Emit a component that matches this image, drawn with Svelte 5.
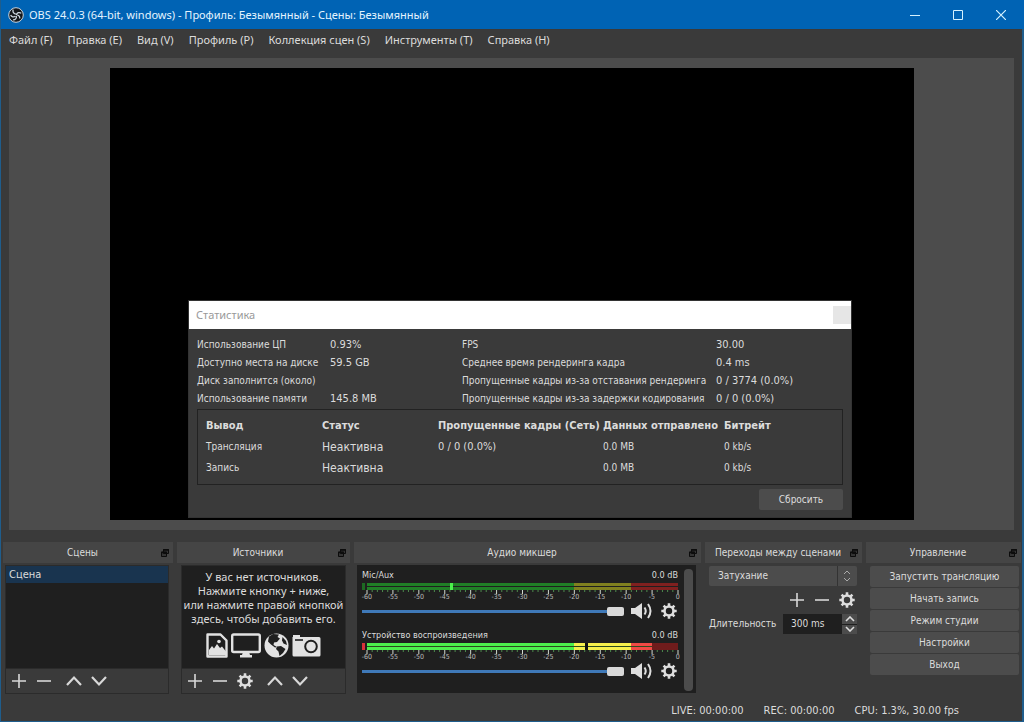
<script lang="ts">
  const menus = [
    "Файл (F)",
    "Правка (E)",
    "Вид (V)",
    "Профиль (P)",
    "Коллекция сцен (S)",
    "Инструменты (T)",
    "Справка (H)",
  ];

  const stats = [
    ["Использование ЦП", "0.93%", "FPS", "30.00"],
    ["Доступно места на диске", "59.5 GB", "Среднее время рендеринга кадра", "0.4 ms"],
    ["Диск заполнится (около)", "", "Пропущенные кадры из-за отставания рендеринга", "0 / 3774 (0.0%)"],
    ["Использование памяти", "145.8 MB", "Пропущенные кадры из-за задержки кодирования", "0 / 0 (0.0%)"],
  ];

  const outputs = [
    { name: "Трансляция", status: "Неактивна", frames: "0 / 0 (0.0%)", sent: "0.0 MB", rate: "0 kb/s" },
    { name: "Запись", status: "Неактивна", frames: "", sent: "0.0 MB", rate: "0 kb/s" },
  ];

  const channels = [
    { id: "mic", name: "Mic/Aux", db: "0.0 dB", level: null, peak: -44, clip: "#1d6b22" },
    { id: "desktop", name: "Устройство воспроизведения", db: "0.0 dB", level: -5, peak: null, clip: "#d8323a" },
  ];

  const scale = [-60, -55, -50, -45, -40, -35, -30, -25, -20, -15, -10, -5, 0];
  const ticks = Array.from({ length: 61 }, (_, i) => i - 60);

  const actions = ["Запустить трансляцию", "Начать запись", "Режим студии", "Настройки", "Выход"];

  let duration = $state("300 ms");

  function pos(db: number) {
    return ((db + 60) / 60) * 100;
  }
</script>

{#snippet plus()}
  <svg width="16" height="16" viewBox="0 0 16 16"><path d="M8 1v14M1 8h14" stroke="#d8d8d8" stroke-width="1.6" /></svg>
{/snippet}

{#snippet minus()}
  <svg width="16" height="16" viewBox="0 0 16 16"><path d="M1 8h14" stroke="#d8d8d8" stroke-width="1.6" /></svg>
{/snippet}

{#snippet up()}
  <svg width="16" height="16" viewBox="0 0 16 16"><path d="M1 12l7-7.500 7 7.500" fill="none" stroke="#d8d8d8" stroke-width="2.200" /></svg>
{/snippet}

{#snippet down()}
  <svg width="16" height="16" viewBox="0 0 16 16"><path d="M1 4l7 7.500L15 4" fill="none" stroke="#d8d8d8" stroke-width="2.200" /></svg>
{/snippet}

{#snippet gear()}
  <svg width="16" height="16" viewBox="0 0 16 16">
    <circle cx="8" cy="8" r="4.500" fill="none" stroke="#dedede" stroke-width="2.600" />
    <path
      d="M8 .3v3M8 12.700v3M.3 8h3M12.700 8h3M2.600 2.600l2 2M11.400 11.400l2 2M2.600 13.400l2-2M11.400 4.600l2-2"
      stroke="#dedede"
      stroke-width="2.600"
    />
  </svg>
{/snippet}

{#snippet dockTitle(title: string)}
  <header class="dock-title">
    <h2>{title}</h2>
    <button class="float" aria-label="Открепить">
      <svg width="8" height="8" viewBox="0 0 8 8">
        <path d="M2.500 .5h5v4h-5zM.5 3h5v4.500h-5z" fill="#333" stroke="#0c0c0c" />
        <path d="M2 1h6M0 3.500h6" stroke="#0c0c0c" stroke-width="1.400" />
      </svg>
    </button>
  </header>
{/snippet}

<div class="window">
  <div class="titlebar">
    <svg class="logo" width="16" height="16" viewBox="0 0 16 16">
      <circle cx="8" cy="8" r="7.300" fill="#15171a" stroke="#c9d4de" stroke-width="1" />
      <path
        d="M5.200 2.600c-.8 2 .2 4 2.600 4.600M13.300 6.200c-2-1.300-4.400-.6-5 1.800M5 12.900c2.300.2 3.800-1.500 3.300-4M2.600 8.200c1 1.700 3 2.200 4.700 1M11.600 11.500c.6-1.500-.5-3-2.300-3.300"
        fill="none"
        stroke="#cdd6de"
        stroke-width="1.300"
      />
    </svg>
    <h1>OBS 24.0.3 (64-bit, windows) - Профиль: Безымянный - Сцены: Безымянный</h1>
    <div class="window-buttons">
      <button aria-label="Свернуть"><svg width="10" height="10" viewBox="0 0 10 10"><path d="M0 5.500h10" stroke="#d5f2ff" /></svg></button>
      <button aria-label="Развернуть"><svg width="10" height="10" viewBox="0 0 10 10"><path d="M.5 .5h9v9h-9z" fill="none" stroke="#d5f2ff" /></svg></button>
      <button aria-label="Закрыть"><svg width="10" height="10" viewBox="0 0 10 10"><path d="M0 0l10 10M10 0L0 10" stroke="#d5f2ff" stroke-width="1.200" /></svg></button>
    </div>
  </div>

  <nav class="menubar">
    {#each menus as item}
      <button>{item}</button>
    {/each}
  </nav>

  <main class="preview">
    <div class="canvas"></div>

    <section class="dialog" aria-label="Статистика">
      <div class="dialog-title">
        <span>Статистика</span>
        <button aria-label="Закрыть статистику"></button>
      </div>
      <div class="dialog-body">
        <div class="stats">
          {#each stats as row}
            {#each row as cell, i}
              <span class:value={i % 2}>{cell}</span>
            {/each}
          {/each}
        </div>
        <div class="outputs">
          <table>
            <thead>
              <tr>
                <th class="c-name">Вывод</th>
                <th class="c-name">Статус</th>
                <th class="c-frames">Пропущенные кадры (Сеть)</th>
                <th class="c-sent">Данных отправлено</th>
                <th>Битрейт</th>
              </tr>
            </thead>
            <tbody>
              {#each outputs as o}
                <tr>
                  <td>{o.name}</td>
                  <td class="status">{o.status}</td>
                  <td class="value">{o.frames}</td>
                  <td>{o.sent}</td>
                  <td>{o.rate}</td>
                </tr>
              {/each}
            </tbody>
          </table>
        </div>
        <button class="btn reset">Сбросить</button>
      </div>
    </section>
  </main>

  <div class="docks">
    <section class="dock">
      {@render dockTitle("Сцены")}
      <div class="panel">
        <ul class="list">
          <li class="selected">Сцена</li>
        </ul>
        <div class="toolbar">
          <button aria-label="Добавить сцену">{@render plus()}</button>
          <button aria-label="Удалить сцену">{@render minus()}</button>
          <button class="apart" aria-label="Сцену вверх">{@render up()}</button>
          <button aria-label="Сцену вниз">{@render down()}</button>
        </div>
      </div>
    </section>

    <section class="dock">
      {@render dockTitle("Источники")}
      <div class="panel sources">
        <div class="list empty">
          <p>
            У вас нет источников.<br />
            Нажмите кнопку + ниже,<br />
            или нажмите правой кнопкой<br />
            здесь, чтобы добавить его.
          </p>
          <div class="kinds">
            <svg width="22" height="25" viewBox="0 0 22 25">
              <path d="M1.500 1.500h13l6 6v16h-19z" fill="#1f1f1f" stroke="#e2e2e2" stroke-width="2.400" stroke-linejoin="round" />
              <path d="M3 22v-5l3-4 2 2.500 3-4.500 3 4 2-1.500 4 5v3.500z" fill="#e2e2e2" />
              <circle cx="13" cy="8.500" r="1.800" fill="#e2e2e2" />
            </svg>
            <svg width="30" height="25" viewBox="0 0 30 25">
              <rect x="1.200" y="1.500" width="27.600" height="17.500" rx="1.500" fill="#1f1f1f" stroke="#e2e2e2" stroke-width="2.400" />
              <path d="M12 19h6l1 3h2v2.500H9V22h2z" fill="#e2e2e2" />
            </svg>
            <svg width="25" height="25" viewBox="0 0 25 25">
              <circle cx="12.500" cy="12.500" r="12" fill="#e2e2e2" />
              <path d="M5 3.500L9 1l6 .5-1.500 2.500 2.500 1.500-3 3.500-3 .5-.5 2.500 3.500 2-2 .5-4-3-3-3z" fill="#1f1f1f" />
              <path d="M13 13.500l4-.5 4.500 3-2.500 4-3.500 3-1-4.500-2.500-2.500z" fill="#1f1f1f" />
              <path d="M18.500 4l3.500 4 1 4-3.500-1.500-1.500-3z" fill="#1f1f1f" />
            </svg>
            <svg width="29" height="25" viewBox="0 0 29 25">
              <path d="M1 4V2h7v2h19a1.500 1.500 0 0 1 1.500 1.500V22a1.500 1.500 0 0 1-1.500 1.500H2A1.500 1.500 0 0 1 .5 22V4z" fill="#e2e2e2" />
              <circle cx="19" cy="13.500" r="5.800" fill="none" stroke="#1f1f1f" stroke-width="2" />
              <path d="M3 7h8" stroke="#1f1f1f" stroke-width="1.600" />
            </svg>
          </div>
        </div>
        <div class="toolbar">
          <button aria-label="Добавить источник">{@render plus()}</button>
          <button aria-label="Удалить источник">{@render minus()}</button>
          <button aria-label="Свойства источника">{@render gear()}</button>
          <button class="apart" aria-label="Источник вверх">{@render up()}</button>
          <button aria-label="Источник вниз">{@render down()}</button>
        </div>
      </div>
    </section>

    <section class="dock">
      {@render dockTitle("Аудио микшер")}
      <div class="mixer">
        <div class="channels">
          {#each channels as ch}
            <div class="channel">
              <div class="channel-head">
                <label for={ch.id}>{ch.name}</label>
                <span>{ch.db}</span>
              </div>
              <div class="meter">
                <i class="clip" style="background: {ch.clip}"></i>
                <div class="scale">
                  <div class="bars" class:live={ch.level !== null}>
                    {#if ch.level !== null}
                      <i class="rest" style="left: {pos(ch.level)}%"></i>
                      <i class="notch" style="left: {pos(-18)}%"></i>
                    {/if}
                    {#if ch.peak !== null}
                      <i class="peak" style="left: {pos(ch.peak)}%"></i>
                    {/if}
                  </div>
                  <svg class="ticks" width="100%" height="4">
                    {#each ticks as t}
                      <line
                        x1="{pos(t)}%"
                        x2="{pos(t)}%"
                        y1="0"
                        y2={t % 5 ? 2 : 4}
                        stroke={t % 5 ? "#4d8a4d" : "#cfd8cf"}
                      />
                    {/each}
                  </svg>
                  <div class="numbers">
                    {#each scale as n}
                      <span>{n}</span>
                    {/each}
                  </div>
                </div>
              </div>
              <div class="volume">
                <input id={ch.id} type="range" min="0" max="100" value="100" />
                <button aria-label="Выключить звук">
                  <svg width="22" height="18" viewBox="0 0 22 18">
                    <path d="M0 6h4l7-5v16l-7-5H0z" fill="#dedede" />
                    <path d="M13.500 5.500q2.500 3.500 0 7M17 2q5 7 0 14" fill="none" stroke="#dedede" stroke-width="2" />
                  </svg>
                </button>
                <button aria-label="Настройки канала">{@render gear()}</button>
              </div>
            </div>
          {/each}
        </div>
        <div class="scrollbar"></div>
      </div>
    </section>

    <section class="dock">
      {@render dockTitle("Переходы между сценами")}
      <div class="transitions">
        <div class="combo">
          <select aria-label="Переход">
            <option>Затухание</option>
          </select>
          <svg width="8" height="12" viewBox="0 0 8 12"><path d="M1 4l3-3 3 3M1 8l3 3 3-3" fill="none" stroke="#aaa" /></svg>
        </div>
        <div class="tools">
          <button aria-label="Добавить переход">{@render plus()}</button>
          <button aria-label="Удалить переход">{@render minus()}</button>
          <button aria-label="Свойства перехода">{@render gear()}</button>
        </div>
        <div class="duration">
          <label for="duration">Длительность</label>
          <div class="spin">
            <input id="duration" type="text" bind:value={duration} />
            <div class="spin-buttons">
              <button aria-label="Больше"><svg width="10" height="6" viewBox="0 0 10 6"><path d="M1 5l4-4 4 4" fill="none" stroke="#ddd" stroke-width="1.600" /></svg></button>
              <button aria-label="Меньше"><svg width="10" height="6" viewBox="0 0 10 6"><path d="M1 1l4 4 4-4" fill="none" stroke="#ddd" stroke-width="1.600" /></svg></button>
            </div>
          </div>
        </div>
      </div>
    </section>

    <section class="dock">
      {@render dockTitle("Управление")}
      <div class="controls">
        {#each actions as action}
          <button class="btn">{action}</button>
        {/each}
      </div>
    </section>
  </div>

  <footer class="statusbar">
    <span>LIVE: 00:00:00</span>
    <span>REC: 00:00:00</span>
    <span>CPU: 1.3%, 30.00 fps</span>
  </footer>
</div>

<style>
  :global(body) {
    margin: 0;
    background: #3a3a3a;
  }

  .window,
  .window * {
    box-sizing: border-box;
  }

  .window {
    display: flex;
    flex-direction: column;
    min-height: 100vh;
    background: #3a3a3a;
    border: solid #1f5d8c;
    border-width: 0 2px 1px 1px;
    color: #dcdcdc;
    font: 10px/14px "DejaVu Sans Condensed", "DejaVu Sans", sans-serif;
  }

  button,
  input,
  select {
    font: inherit;
    color: inherit;
    margin: 0;
    padding: 0;
    border: 0;
    background: none;
  }

  button {
    display: flex;
    align-items: center;
    justify-content: center;
  }

  svg {
    display: block;
    flex: none;
  }

  h1,
  h2,
  p,
  ul {
    margin: 0;
    padding: 0;
    font-size: inherit;
    font-weight: normal;
  }

  .titlebar {
    display: flex;
    align-items: center;
    height: 29px;
    margin-right: -2px;
    padding: 0 2px 0 7px;
    background: #0063b4;
    color: #e4f4ff;
  }

  .titlebar h1 {
    flex: 1;
    padding-left: 5px;
    font: 11px/16px "Noto Sans", "Open Sans", sans-serif;
  }

  .window-buttons {
    display: flex;
  }

  .window-buttons button {
    width: 43px;
    height: 29px;
  }

  .menubar {
    display: flex;
    gap: 15px;
    height: 29px;
    padding: 3px 8px 0;
  }

  .menubar button {
    height: 16px;
    font: 11px/16px "Noto Sans", "Open Sans", sans-serif;
    white-space: nowrap;
  }

  .preview {
    position: relative;
    flex: 1;
    display: flex;
    align-items: center;
    justify-content: center;
    margin: 0 8px;
    background: #4c4c4c;
  }

  .canvas {
    width: 80%;
    aspect-ratio: 16 / 9;
    background: #000;
  }

  .dialog {
    position: absolute;
    left: 179px;
    bottom: 12px;
    width: 664px;
    background: #3a3a3a;
    border: 1px solid #333;
  }

  .dialog-title {
    display: flex;
    align-items: center;
    justify-content: space-between;
    height: 28px;
    padding-left: 7px;
    background: #fff;
    color: #999;
    font: 11px/16px "Noto Sans", "Open Sans", sans-serif;
  }

  .dialog-title button {
    width: 18px;
    height: 18px;
    background: #e6e6e6;
  }

  .dialog-body {
    display: flex;
    flex-direction: column;
    padding: 7px 8px;
  }

  .stats {
    display: grid;
    grid-template-columns: 133px 132px 254px 1fr;
    line-height: 18px;
    white-space: nowrap;
  }

  .value {
    font-size: 11px;
  }

  .outputs {
    height: 76px;
    margin-top: 1px;
    padding: 6px 8px;
    border: 1px solid #222;
  }

  table {
    width: 100%;
    border-collapse: collapse;
    table-layout: fixed;
  }

  th,
  td {
    height: 21px;
    padding: 0;
    text-align: left;
    white-space: nowrap;
  }

  th {
    height: 20px;
    font-size: 11px;
  }

  .c-name {
    width: 116px;
  }

  .c-frames {
    width: 165px;
  }

  .c-sent {
    width: 121px;
  }

  .status {
    font-size: 12px;
  }

  .btn {
    height: 21px;
    border-radius: 2px;
    background: #4c4c4c;
  }

  .reset {
    align-self: flex-end;
    width: 84px;
    margin-top: 4px;
  }

  .docks {
    display: grid;
    grid-template-columns: 170fr 173fr 347fr 157fr 155fr;
    gap: 4px;
    padding: 12px 1px 0 2px;
  }

  .dock {
    display: flex;
    flex-direction: column;
    min-width: 0;
  }

  .dock-title {
    display: flex;
    align-items: center;
    height: 21px;
    padding: 0 3px 0 2px;
    background: #454545;
  }

  .dock-title h2 {
    flex: 1;
    text-align: center;
    white-space: nowrap;
  }

  .float {
    width: 10px;
    height: 10px;
  }

  .panel {
    display: flex;
    flex-direction: column;
    height: 129px;
    margin: 2px 4px 0 2px;
    border: 1px solid #2b2b2b;
  }

  .sources {
    margin-left: 4px;
  }

  .list {
    flex: 1;
    background: #1f1f1f;
    list-style: none;
  }

  .selected {
    height: 17px;
    padding-left: 3px;
    background: #19344f;
    font-size: 11px;
    line-height: 17px;
  }

  .empty {
    display: flex;
    flex-direction: column;
    align-items: center;
    padding-top: 4px;
    font: 11px/14px "Noto Sans", "Open Sans", sans-serif;
    text-align: center;
    white-space: nowrap;
  }

  .kinds {
    display: flex;
    justify-content: center;
    gap: 3px;
    margin-top: 7px;
  }

  .toolbar {
    display: flex;
    align-items: center;
    gap: 9px;
    height: 25px;
    padding-left: 5px;
    border-top: 1px solid #2b2b2b;
  }

  .apart {
    margin-left: 5px;
  }

  .mixer {
    display: flex;
    height: 128px;
    margin: 2px 5px 0 3px;
    padding: 4px 3px 2px 5px;
    background: #1f1f1f;
  }

  .channels {
    flex: 1;
  }

  .channel {
    height: 60px;
  }

  .channel-head {
    display: flex;
    justify-content: space-between;
    height: 14px;
    font-size: 9px;
    line-height: 13px;
  }

  .meter {
    display: flex;
    gap: 2px;
  }

  .clip {
    width: 3px;
    height: 7px;
  }

  .scale {
    flex: 1;
  }

  /* -20 dB sits at 66.67%, -9 dB at 85% */
  .bars {
    position: relative;
    height: 7px;
    background:
      linear-gradient(transparent 3px, #1f1f1f 3px, #1f1f1f 4px, transparent 4px),
      linear-gradient(90deg, #207f26 66.67%, #80801f 66.67%, #80801f 85%, #80201f 85%);
  }

  .bars.live {
    background:
      linear-gradient(transparent 3px, #2c4a20 3px, #2c4a20 4px, transparent 4px),
      linear-gradient(90deg, #4cf04c 66.67%, #f6f04c 66.67%, #f6f04c 85%, #f04a45 85%);
  }

  .bars i {
    position: absolute;
    top: 0;
    height: 7px;
  }

  .rest {
    right: 0;
    background: #701c1c;
  }

  .notch {
    width: 3px;
    background: #111;
  }

  .peak {
    width: 3px;
    background: #4cf04c;
  }

  .ticks {
    overflow: visible;
  }

  .numbers {
    display: flex;
    justify-content: space-between;
    margin: 0 -8px;
    font-size: 7px;
    line-height: 7px;
    color: #bbb;
  }

  .numbers span {
    width: 16px;
    text-align: center;
  }

  .volume {
    display: flex;
    align-items: center;
    gap: 8px;
    height: 18px;
    margin-top: 1px;
    padding-right: 1px;
  }

  .volume input {
    flex: 1;
    min-width: 0;
    height: 9px;
    margin-right: -1px;
    appearance: none;
  }

  .volume input::-webkit-slider-runnable-track {
    height: 9px;
    background: linear-gradient(transparent 3px, #3f79b8 3px, #3f79b8 6px, transparent 6px);
  }

  .volume input::-webkit-slider-thumb {
    appearance: none;
    width: 17px;
    height: 9px;
    border-radius: 2px;
    background: #d8d8d8;
  }

  .scrollbar {
    width: 9px;
    margin-left: 6px;
    border-radius: 4px;
    background: #4c4c4c;
  }

  .transitions {
    display: flex;
    flex-direction: column;
    padding: 3px 5px 0 4px;
  }

  .combo {
    position: relative;
    display: flex;
  }

  .combo select {
    flex: 1;
    height: 20px;
    padding-left: 9px;
    appearance: none;
    border-radius: 2px;
    background: linear-gradient(90deg, transparent calc(100% - 20px), #333 calc(100% - 20px), #333 calc(100% - 19px), transparent calc(100% - 19px)) #4c4c4c;
  }

  .combo svg {
    position: absolute;
    top: 4px;
    right: 6px;
    pointer-events: none;
  }

  .tools {
    display: flex;
    justify-content: flex-end;
    gap: 9px;
    margin-top: 6px;
    padding-right: 2px;
  }

  .duration {
    display: flex;
    align-items: center;
    justify-content: space-between;
    margin-top: 6px;
  }

  .spin {
    display: flex;
    width: 74px;
    height: 20px;
    background: #1f1f1f;
  }

  .spin input {
    flex: 1;
    min-width: 0;
    padding-left: 8px;
  }

  .spin-buttons {
    display: flex;
    flex-direction: column;
    gap: 1px;
    width: 15px;
  }

  .spin-buttons button {
    flex: 1;
    background: #4c4c4c;
  }

  .controls {
    display: flex;
    flex-direction: column;
    gap: 1px;
    padding: 3px 2px 0 4px;
  }

  .statusbar {
    display: flex;
    justify-content: flex-end;
    gap: 20px;
    height: 27px;
    padding: 10px 63px 0 0;
    font-size: 11px;
  }
</style>
